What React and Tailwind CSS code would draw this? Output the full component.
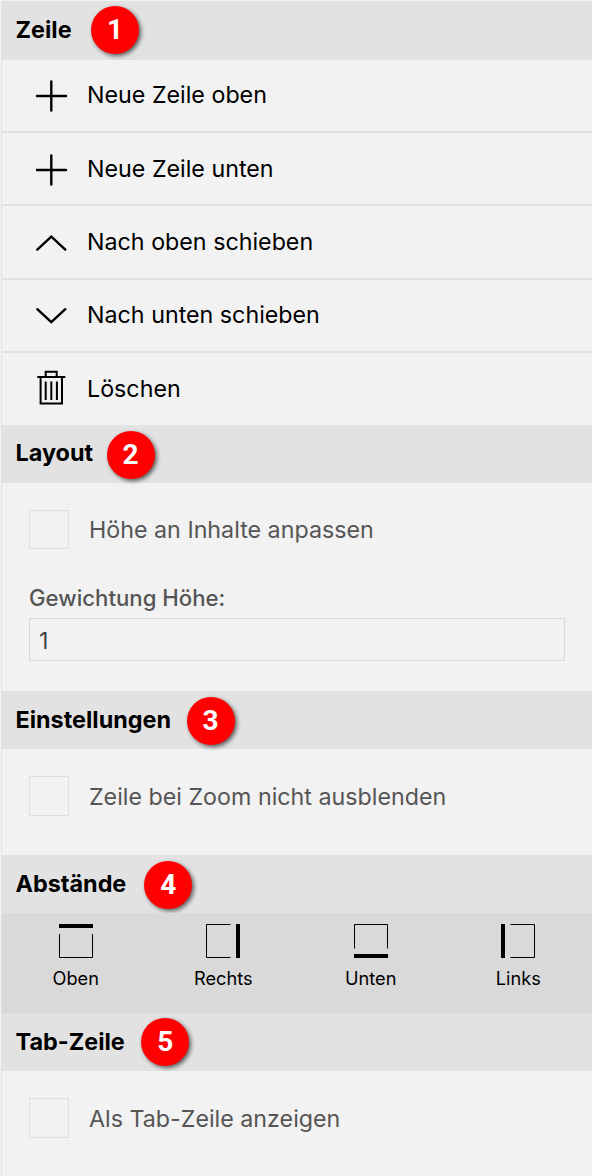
const ACTIONS = [
  { label: "Neue Zeile oben", icon: "plus", row: "h-[73px] border-b-2 pt-0" },
  { label: "Neue Zeile unten", icon: "plus", row: "h-[73px] border-b-2 pt-0.5" },
  { label: "Nach oben schieben", icon: "up", row: "h-[74px] border-b-2 pt-px" },
  { label: "Nach unten schieben", icon: "down", row: "h-[73px] border-b-2 pt-0" },
  { label: "Löschen", icon: "trash", row: "h-[72px] pt-0.5" },
];

const ICONS = {
  plus: <path d="M3 17H32M17.3 2.5V31.5" strokeWidth="2.4" strokeLinecap="round" />,
  up: <path d="M3.3 23.6L17.3 10.6L31.3 23.6" strokeWidth="2.4" strokeLinecap="round" />,
  down: <path d="M3.3 10.2L17.3 23.2L31.3 10.2" strokeWidth="2.4" strokeLinecap="round" />,
  trash: (
    <path
      d="M3.3 4H31.3M11.7 4V-1.2H22.7V4M6.6 4V30.5H28V4M11.7 8.5V27M17.3 8.5V27M22.9 8.5V27"
      strokeWidth="2"
    />
  ),
};

function Icon({ name }) {
  return (
    <svg
      className="size-[34px] shrink-0 overflow-visible"
      viewBox="0 0 34 34"
      fill="none"
      stroke="black"
    >
      {ICONS[name]}
    </svg>
  );
}

function Header({ title, number, height = "h-[58px] pt-px", text = "pb-[2px]", gap }) {
  return (
    <h2 className={`flex shrink-0 items-center bg-[#e2e2e2] pl-[13.5px] ${height} ${gap}`}>
      <span className={`text-[23.4px] leading-7 font-bold ${text}`}>{title}</span>
      <span className="flex size-12 items-center justify-center rounded-full bg-[#ff0000] font-[Roboto] text-[28px] leading-none font-bold text-white shadow-[2px_2px_4px_rgba(0,0,0,0.6)]">
        {number}
      </span>
    </h2>
  );
}

function Check({ label, height = "h-10" }) {
  return (
    <label className="flex items-center gap-5 text-[23.25px] leading-7 text-[#555]">
      <input type="checkbox" className={`w-10 appearance-none border border-[#dedede] ${height}`} />
      <span className="pt-px">{label}</span>
    </label>
  );
}

const SIDES = [
  { label: "Oben", thin: "M.5 10V33.5H33.5V10", thick: "M0 2H34" },
  { label: "Rechts", thin: "M24.5 .5H.5V33.5H24.5", thick: "M32 0V34" },
  { label: "Unten", thin: "M.5 24.5V.5H33.5V24.5", thick: "M0 32H34" },
  { label: "Links", thin: "M9.5 .5H33.5V33.5H9.5", thick: "M2 0V34" },
];

export default function App() {
  return (
    <div className="h-[1176px] w-[592px] overflow-hidden bg-[#f2f2f2] pt-px pl-px font-[Inter,sans-serif] text-black">
      <main className="flex h-full flex-col border-l border-[#e2e2e2]">
        <Header title="Zeile" number={1} height="h-[59px] pb-px" text="pb-px" gap="gap-[19.5px]" />
        <ul>
          {ACTIONS.map((a) => (
            <li key={a.label} className={`border-[#e0e0e0] ${a.row}`}>
              <button className="flex h-full w-full items-center gap-[19px] pl-8 text-left text-[23.25px] leading-7">
                <Icon name={a.icon} />
                <span className="pb-[2px]">{a.label}</span>
              </button>
            </li>
          ))}
        </ul>
        <Header title="Layout" number={2} text="pb-[3px]" gap="gap-[13.5px]" />
        <section className="h-[208px] px-[27px] pt-[27px]">
          <Check label="Höhe an Inhalte anpassen" height="h-[39px]" />
          <label className="mt-[35px] block text-[22.2px] leading-7 font-medium text-[#555]">
            Gewichtung Höhe:
            <input
              type="text"
              defaultValue="1"
              className="mt-[6px] block h-[43px] w-[536px] border border-[#d9d9d9] pt-[2px] pl-[9px] text-[23.25px] font-normal text-[#444] outline-none"
            />
          </label>
        </section>
        <Header title="Einstellungen" number={3} gap="gap-[15.5px]" />
        <section className="h-[106px] px-[27px] pt-[27px]">
          <Check label="Zeile bei Zoom nicht ausblenden" />
        </section>
        <Header title="Abstände" number={4} gap="gap-[18px]" />
        <div className="grid h-[100px] grid-cols-4 bg-[#d9d9d9] pt-[11px]">
          {SIDES.map((s) => (
            <button key={s.label} className="flex flex-col items-center text-[18.2px] leading-6">
              <svg className="h-[34px] w-[34px]" viewBox="0 0 34 34" fill="none" stroke="black">
                <path d={s.thin} strokeWidth="1" />
                <path d={s.thick} strokeWidth="4" />
              </svg>
              <span className="mt-[8px]">{s.label}</span>
            </button>
          ))}
        </div>
        <Header title="Tab-Zeile" number={5} height="h-[58px]" text="pb-0" gap="gap-[16.5px]" />
        <section className="px-[27px] pt-[27px]">
          <Check label="Als Tab-Zeile anzeigen" />
        </section>
      </main>
    </div>
  );
}
